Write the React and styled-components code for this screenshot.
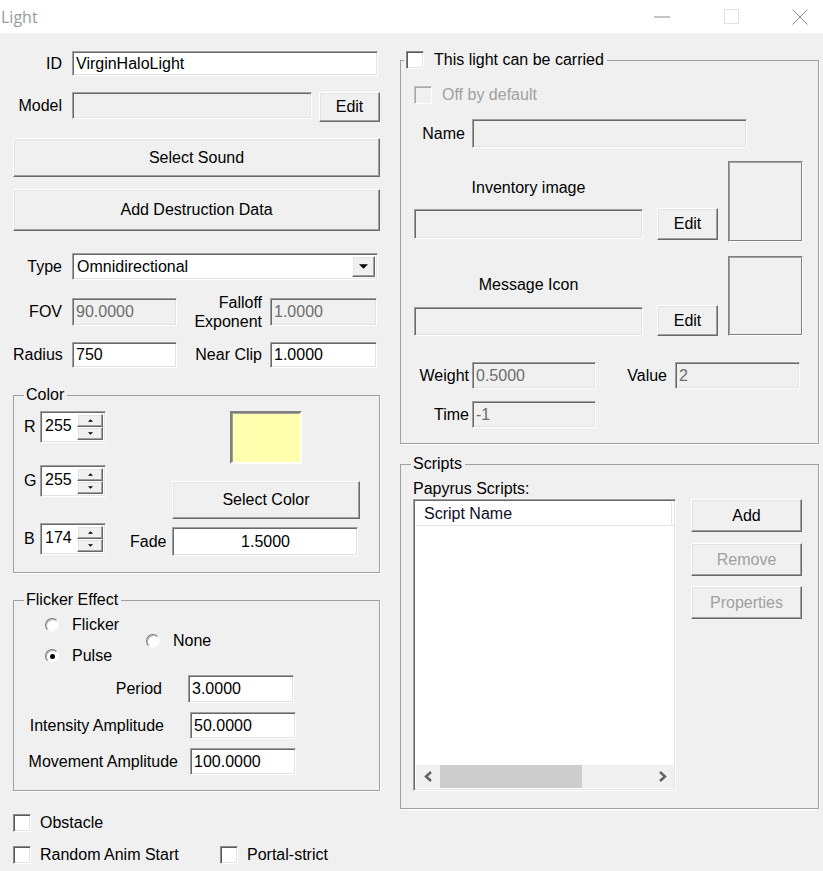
import styled, { createGlobalStyle } from "styled-components";

const UI_FONT = `"Liberation Sans", Arial, sans-serif`;

const GlobalStyle = createGlobalStyle`
  html, body {
    margin: 0;
    padding: 0;
    background: #f0f0f0;
  }
  body {
    font-family: ${UI_FONT};
    font-size: 16px;
    color: #000;
  }
  * {
    box-sizing: border-box;
  }
`;

// classic 3D edges
const sunken = `
  border: 1px solid;
  border-color: #a0a0a0 #ffffff #ffffff #a0a0a0;
  box-shadow: inset 1px 1px 0 #696969, inset -1px -1px 0 #e3e3e3;
`;

const raised = `
  border: 1px solid;
  border-color: #ffffff #696969 #696969 #ffffff;
  box-shadow: inset -1px -1px 0 #a0a0a0, inset 1px 1px 0 #e3e3e3;
`;

const Window = styled.div`
  width: 823px;
  height: 871px;
  background: #f0f0f0;
  display: flex;
  flex-direction: column;
  overflow: hidden;
`;

const TitleBar = styled.header`
  height: 33px;
  flex: none;
  background: #fff;
  display: flex;
  align-items: center;
  justify-content: space-between;
`;

const Caption = styled.span`
  font-family: "Open Sans", "Noto Sans", sans-serif;
  font-size: 16px;
  color: #9a9a9a;
  padding-left: 1px;
`;

const Controls = styled.div`
  display: flex;
  gap: 23px;
  height: 100%;
`;

const ControlButton = styled.span`
  width: 46px;
  height: 100%;
  display: flex;
  align-items: center;
  justify-content: center;
`;

const Body = styled.main`
  display: flex;
  gap: 20px;
  padding-left: 13px;
`;

const Column = styled.section`
  width: ${(p) => p.$w}px;
  display: flex;
  flex-direction: column;
`;

const Row = styled.div`
  display: flex;
  align-items: ${(p) => p.$align ?? "center"};
  gap: ${(p) => p.$gap ?? 0}px;
  margin-top: ${(p) => p.$mt ?? 0}px;
  margin-left: ${(p) => p.$ml ?? 0}px;
  height: ${(p) => (p.$h ? `${p.$h}px` : "auto")};
`;

const Label = styled.label`
  flex: none;
  width: ${(p) => (p.$w ? `${p.$w}px` : "auto")};
  text-align: ${(p) => p.$align ?? "right"};
  line-height: ${(p) => p.$lh ?? 20}px;
  white-space: pre-line;
  color: ${(p) => (p.$dim ? "#a0a0a0" : "#000")};
`;

const TextBox = styled.input.attrs({ type: "text", readOnly: true })`
  ${sunken}
  flex: none;
  width: ${(p) => p.$w}px;
  height: ${(p) => p.$h ?? 26}px;
  margin: 0 0 ${(p) => p.$mb ?? 0}px;
  padding: 0 2px 0 3px;
  font: inherit;
  color: #000;
  background: #fff;
  text-align: ${(p) => (p.$center ? "center" : "left")};
  outline: none;

  &:disabled {
    background: #f0f0f0;
    color: #6d6d6d;
  }
`;

const Button = styled.button`
  ${raised}
  flex: none;
  width: ${(p) => p.$w}px;
  height: ${(p) => p.$h}px;
  margin: ${(p) => p.$mt ?? 0}px 0 ${(p) => p.$mb ?? 0}px;
  padding: 0;
  background: #f0f0f0;
  font: inherit;
  color: #000;

  &:disabled {
    color: #a0a0a0;
  }
`;

const Select = styled.div`
  ${sunken}
  width: 306px;
  height: 27px;
  background: #fff;
  display: flex;
  align-items: center;
  justify-content: space-between;
  padding: 2px 2px 2px 4px;
`;

const DropButton = styled.span`
  ${raised}
  width: 23px;
  height: 21px;
  background: #f0f0f0;
  display: flex;
  align-items: center;
  justify-content: center;
`;

const Group = styled.fieldset`
  margin: ${(p) => p.$mt ?? 0}px 0 0;
  padding: 0 0 ${(p) => p.$pb ?? 0}px;
  border: 1px solid #a0a0a0;
  box-shadow: 1px 1px 0 #fff;
  min-inline-size: 0;
  display: flex;
  flex-direction: column;
`;

const Legend = styled.legend`
  margin-left: ${(p) => p.$ml ?? 10}px;
  padding: 0 3px 0 2px;
  line-height: 18px;
  display: flex;
  align-items: center;
  gap: 10px;
`;

const SpinBox = styled.div`
  ${sunken}
  width: 66px;
  height: 32px;
  background: #fff;
  display: flex;
  align-items: stretch;
  padding: 2px 2px 2px 0;
`;

const SpinValue = styled.span`
  flex: 1;
  padding-left: 4px;
  line-height: 24px;
`;

const SpinArrows = styled.span`
  width: 26px;
  display: flex;
  flex-direction: column;
`;

const SpinArrow = styled.span`
  ${raised}
  flex: 1;
  background: #f0f0f0;
  display: flex;
  align-items: center;
  justify-content: center;
`;

const Swatch = styled.div`
  width: 72px;
  height: 53px;
  background: rgb(255, 255, 174);
  border: 2px solid;
  border-color: #808080 #fff #fff #808080;
  box-shadow: inset 1px 1px 0 #a0a0a0;
`;

const ColorSide = styled.div`
  width: 230px;
  display: flex;
  flex-direction: column;
`;

const SwatchStack = styled.div`
  margin-left: 42px;
  width: 188px;
  display: flex;
  flex-direction: column;
  align-items: center;
`;

const SpinColumn = styled.div`
  display: flex;
  flex-direction: column;
`;

const RadioGroup = styled.div`
  display: flex;
  align-items: center;
  margin: 6px 0 0 31px;
`;

const RadioStack = styled.div`
  width: 101px;
  display: flex;
  flex-direction: column;
  gap: 11px;
`;

const RadioItem = styled.label`
  display: flex;
  align-items: center;
  gap: 13px;
  line-height: 20px;
`;

const RadioDot = styled.span`
  position: relative;
  flex: none;
  width: 14px;
  height: 14px;
  border-radius: 50%;
  border: 1px solid;
  border-color: #7a7a7a #f8f8f8 #f8f8f8 #7a7a7a;
  background: #fff;
  box-shadow: inset 1px 1px 0 #b4b4b4;

  &::after {
    content: "";
    display: ${(p) => (p.$on ? "block" : "none")};
    position: absolute;
    left: 3.5px;
    top: 3.5px;
    width: 5px;
    height: 5px;
    border-radius: 50%;
    background: #000;
  }
`;

const CheckItem = styled.label`
  display: flex;
  align-items: center;
  gap: ${(p) => p.$gap ?? 9}px;
  width: ${(p) => (p.$w ? `${p.$w}px` : "auto")};
  line-height: 20px;
  color: ${(p) => (p.$dim ? "#a0a0a0" : "#000")};
`;

const CheckBox = styled.span`
  flex: none;
  width: 18px;
  height: 18px;
  border: 1px solid;
  border-color: #8a8a8a #fff #fff #8a8a8a;
  box-shadow: inset 1px 1px 0 #5a5a5a, inset -1px -1px 0 #e3e3e3;
  background: ${(p) => (p.$dim ? "#f0f0f0" : "#fff")};
  ${(p) => p.$dim && "border-color: #c0c0c0 #fff #fff #c0c0c0; box-shadow: inset 1px 1px 0 #a8a8a8;"}
`;

const PictureBox = styled.div`
  flex: none;
  width: 75px;
  height: ${(p) => p.$h}px;
  border: 1px solid;
  border-color: #808080 #fff #fff #808080;
  box-shadow: inset 1px 1px 0 #a0a0a0, inset -1px -1px 0 #808080;
`;

const FileColumn = styled.div`
  width: 229px;
  flex: none;
  display: flex;
  flex-direction: column;
  align-items: center;
`;

const FileCaption = styled.span`
  line-height: 20px;
  margin-bottom: ${(p) => p.$mb}px;
`;

const ListView = styled.div`
  ${sunken}
  width: 263px;
  height: 292px;
  margin-top: 1px;
  background: #fff;
  display: flex;
  flex-direction: column;
  padding: 2px 1px 2px 2px;
`;

const ListHeader = styled.div`
  height: 24px;
  flex: none;
  display: flex;
  border-bottom: 1px solid #e5e5e5;
`;

const HeaderCell = styled.span`
  width: 256px;
  padding-left: 8px;
  line-height: 23px;
  color: #0f0f2a;
  border-right: 1px solid #e5e5e5;
`;

const ListRows = styled.div`
  flex: 1;
`;

const HScroll = styled.div`
  height: 23px;
  flex: none;
  background: #f0f0f0;
  display: flex;
  align-items: center;
`;

const ScrollArrow = styled.span`
  width: 24px;
  height: 100%;
  flex: none;
  display: flex;
  align-items: center;
  justify-content: center;
`;

const ScrollTrack = styled.span`
  flex: 1;
  height: 100%;
  display: flex;
  align-items: stretch;
`;

const ScrollThumb = styled.span`
  width: 142px;
  background: #cdcdcd;
`;

const ButtonStack = styled.div`
  display: flex;
  flex-direction: column;
  margin-left: 15px;
`;

const SpinRow = styled(Row)`
  gap: 7px;
`;

const Tri = ({ dir = "down", size = 7 }) => (
  <svg width={size} height={Math.ceil(size / 2)} viewBox="0 0 8 4">
    <path d={dir === "down" ? "M0 0H8L4 4Z" : "M0 4H8L4 0Z"} fill="#000" />
  </svg>
);

const Chevron = ({ left }) => (
  <svg width="9" height="11" viewBox="0 0 9 11">
    <path
      d={left ? "M7 1L2 5.5L7 10" : "M2 1L7 5.5L2 10"}
      fill="none"
      stroke="#606060"
      strokeWidth="2.4"
    />
  </svg>
);

const Spin = ({ value }) => (
  <SpinBox>
    <SpinValue>{value}</SpinValue>
    <SpinArrows>
      <SpinArrow>
        <Tri dir="up" size={5} />
      </SpinArrow>
      <SpinArrow>
        <Tri size={5} />
      </SpinArrow>
    </SpinArrows>
  </SpinBox>
);

export default function App() {
  return (
    <Window>
      <GlobalStyle />
      <TitleBar>
        <Caption>Light</Caption>
        <Controls>
          <ControlButton>
            <svg width="16" height="2">
              <path d="M0 1H16" stroke="#8c8c8c" />
            </svg>
          </ControlButton>
          <ControlButton>
            <svg width="15" height="15">
              <rect x="0.5" y="0.5" width="14" height="14" fill="none" stroke="#e2e2e2" />
            </svg>
          </ControlButton>
          <ControlButton>
            <svg width="16" height="16">
              <path d="M0.5 0.5L15.5 15.5M15.5 0.5L0.5 15.5" stroke="#8c8c8c" />
            </svg>
          </ControlButton>
        </Controls>
      </TitleBar>

      <Body>
        <Column $w={367}>
          <Row $mt={18} $gap={10}>
            <Label $w={49}>ID</Label>
            <TextBox $w={306} $h={25} defaultValue="VirginHaloLight" />
          </Row>
          <Row $mt={16} $align="flex-start">
            <Label $w={49} $lh={28}>Model</Label>
            <TextBox $w={240} $h={27} disabled style={{ marginLeft: 10 }} />
            <Button $w={61} $h={30} style={{ marginLeft: 7 }}>
              Edit
            </Button>
          </Row>
          <Button $w={367} $h={39} $mt={16}>
            Select Sound
          </Button>
          <Button $w={367} $h={42} $mt={12}>
            Add Destruction Data
          </Button>
          <Row $mt={22} $gap={10}>
            <Label $w={49}>Type</Label>
            <Select>
              <span>Omnidirectional</span>
              <DropButton>
                <Tri size={9} />
              </DropButton>
            </Select>
          </Row>
          <Row $mt={18} $h={28}>
            <Label $w={49}>FOV</Label>
            <TextBox $w={105} $h={28} disabled defaultValue="90.0000" style={{ marginLeft: 10 }} />
            <Label $w={85} $lh={19}>{"Falloff\nExponent"}</Label>
            <TextBox $w={107} $h={28} disabled defaultValue="1.0000" style={{ marginLeft: 8 }} />
          </Row>
          <Row $mt={16}>
            <Label $w={49}>Radius</Label>
            <TextBox $w={105} $h={26} defaultValue="750" style={{ marginLeft: 10 }} />
            <Label $w={85}>Near Clip</Label>
            <TextBox $w={107} $h={26} defaultValue="1.0000" style={{ marginLeft: 8 }} />
          </Row>

          <Group $mt={18} $pb={16}>
            <Legend>Color</Legend>
            <Row $mt={7} $ml={10} $align="flex-start" $gap={24}>
              <SpinColumn>
                <SpinRow>
                  <Label $w={9}>R</Label>
                  <Spin value="255" />
                </SpinRow>
                <SpinRow $mt={22}>
                  <Label $w={9}>G</Label>
                  <Spin value="255" />
                </SpinRow>
                <SpinRow $mt={26}>
                  <Label $w={9}>B</Label>
                  <Spin value="174" />
                </SpinRow>
              </SpinColumn>
              <ColorSide>
                <SwatchStack>
                  <Swatch />
                  <Button $w={188} $h={38} $mt={17}>
                    Select Color
                  </Button>
                </SwatchStack>
                <Row $mt={8} $gap={6}>
                  <Label $w={36}>Fade</Label>
                  <TextBox $w={186} $h={29} $center defaultValue="1.5000" />
                </Row>
              </ColorSide>
            </Row>
          </Group>

          <Group $mt={18} $pb={15}>
            <Legend>Flicker Effect</Legend>
            <RadioGroup>
              <RadioStack>
                <RadioItem>
                  <RadioDot />
                  Flicker
                </RadioItem>
                <RadioItem>
                  <RadioDot $on />
                  Pulse
                </RadioItem>
              </RadioStack>
              <RadioItem>
                <RadioDot />
                None
              </RadioItem>
            </RadioGroup>
            <Row $mt={9} $gap={26}>
              <Label $w={148}>Period</Label>
              <TextBox $w={106} $h={28} defaultValue="3.0000" />
            </Row>
            <Row $mt={9} $gap={26}>
              <Label $w={150}>Intensity Amplitude</Label>
              <TextBox $w={106} $h={27} defaultValue="50.0000" />
            </Row>
            <Row $mt={9} $gap={12}>
              <Label $w={164}>Movement Amplitude</Label>
              <TextBox $w={106} $h={27} defaultValue="100.0000" />
            </Row>
          </Group>

          <Row $mt={22}>
            <CheckItem>
              <CheckBox />
              Obstacle
            </CheckItem>
          </Row>
          <Row $mt={12}>
            <CheckItem $w={207}>
              <CheckBox />
              Random Anim Start
            </CheckItem>
            <CheckItem>
              <CheckBox />
              Portal-strict
            </CheckItem>
          </Row>
        </Column>

        <Column $w={419}>
          <Group $mt={18} $pb={15}>
            <Legend $ml={3}>
              <CheckBox />
              This light can be carried
            </Legend>
            <Row $mt={16} $ml={13}>
              <CheckItem $dim $gap={10}>
                <CheckBox $dim />
                Off by default
              </CheckItem>
            </Row>
            <Row $mt={14} $ml={13} $gap={7}>
              <Label $w={51}>Name</Label>
              <TextBox $w={275} $h={29} disabled />
            </Row>
            <Row $mt={13} $ml={13} $align="flex-end">
              <FileColumn>
                <FileCaption $mb={11}>Inventory image</FileCaption>
                <TextBox $w={229} $h={30} $mb={3} disabled />
              </FileColumn>
              <Button $w={61} $h={32} $mb={2} style={{ marginLeft: 14 }}>
                Edit
              </Button>
              <PictureBox $h={81} style={{ marginLeft: 10 }} />
            </Row>
            <Row $mt={14} $ml={13} $align="flex-end">
              <FileColumn>
                <FileCaption $mb={12}>Message Icon</FileCaption>
                <TextBox $w={229} $h={29} disabled />
              </FileColumn>
              <Button $w={61} $h={31} style={{ marginLeft: 14 }}>
                Edit
              </Button>
              <PictureBox $h={80} style={{ marginLeft: 10 }} />
            </Row>
            <Row $mt={26} $ml={13}>
              <Label $w={55}>Weight</Label>
              <TextBox $w={124} $h={27} disabled defaultValue="0.5000" style={{ marginLeft: 3 }} />
              <Label $w={71}>Value</Label>
              <TextBox $w={125} $h={27} disabled defaultValue="2" style={{ marginLeft: 8 }} />
            </Row>
            <Row $mt={12} $ml={13}>
              <Label $w={55}>Time</Label>
              <TextBox $w={124} $h={27} disabled defaultValue="-1" style={{ marginLeft: 3 }} />
            </Row>
          </Group>

          <Group $mt={11} $pb={17}>
            <Legend>Scripts</Legend>
            <Row $mt={7} $ml={12}>
              <Label $align="left" $lh={18}>Papyrus Scripts:</Label>
            </Row>
            <Row $ml={12} $align="flex-start">
              <ListView>
                <ListHeader>
                  <HeaderCell>Script Name</HeaderCell>
                </ListHeader>
                <ListRows />
                <HScroll>
                  <ScrollArrow>
                    <Chevron left />
                  </ScrollArrow>
                  <ScrollTrack>
                    <ScrollThumb />
                  </ScrollTrack>
                  <ScrollArrow>
                    <Chevron />
                  </ScrollArrow>
                </HScroll>
              </ListView>
              <ButtonStack>
                <Button $w={111} $h={33} $mt={1}>
                  Add
                </Button>
                <Button $w={111} $h={33} $mt={11} disabled>
                  Remove
                </Button>
                <Button $w={111} $h={33} $mt={10} disabled>
                  Properties
                </Button>
              </ButtonStack>
            </Row>
          </Group>
        </Column>
      </Body>
    </Window>
  );
}
